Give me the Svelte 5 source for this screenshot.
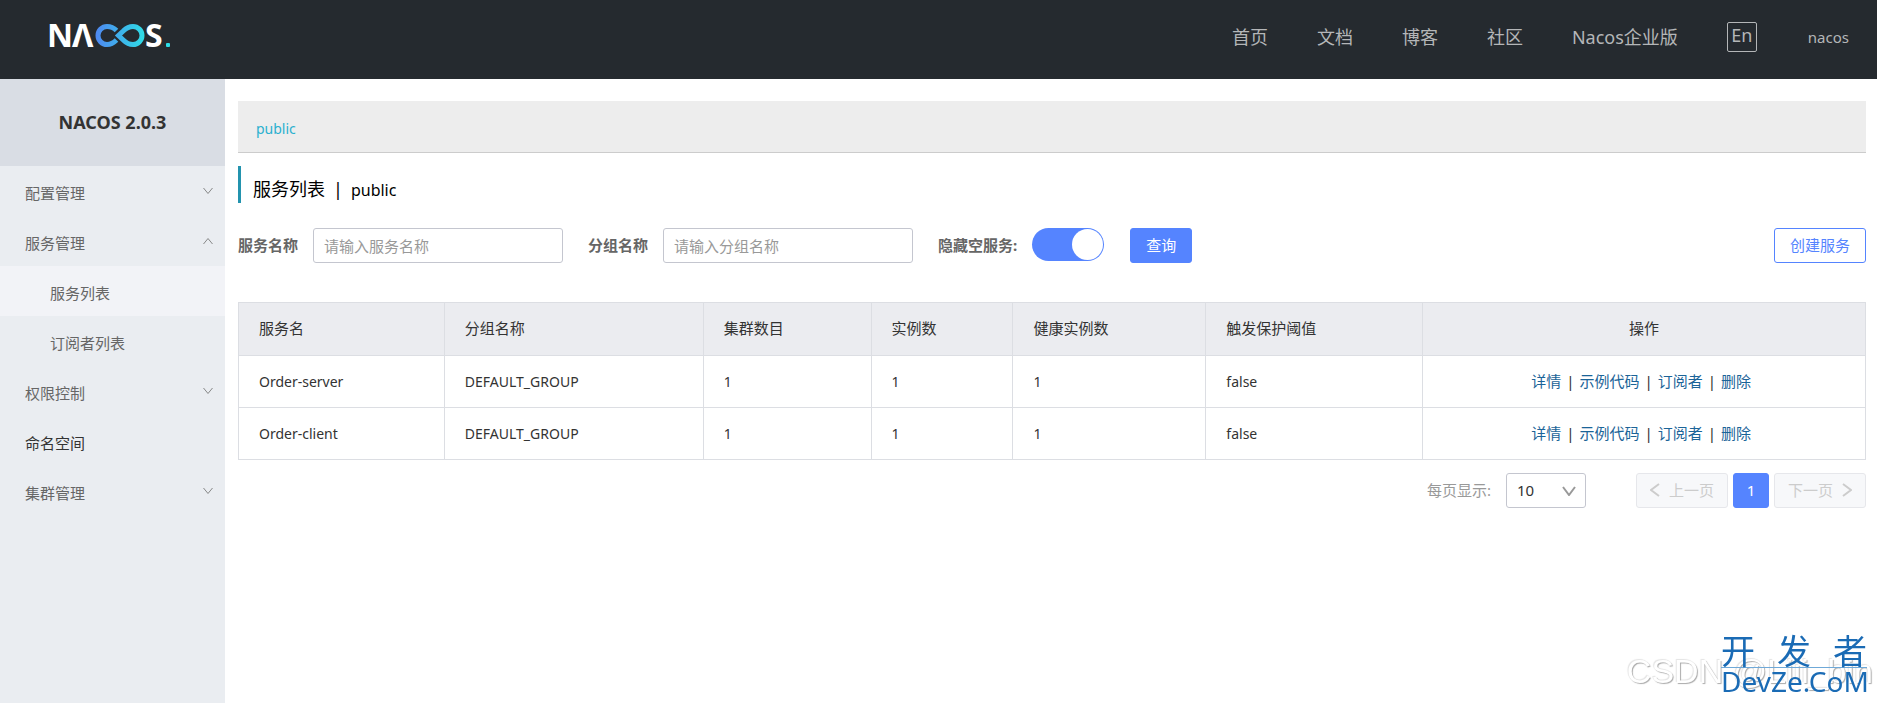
<script lang="ts">
	type MenuItem = {
		name: string;
		open?: boolean;
		leaf?: boolean;
		children?: string[];
	};

	const navs = ['首页', '文档', '博客', '社区', 'Nacos企业版'];
	const columns = [
		{ title: '服务名', width: 206 },
		{ title: '分组名称', width: 259 },
		{ title: '集群数目', width: 168 },
		{ title: '实例数', width: 142 },
		{ title: '健康实例数', width: 193 },
		{ title: '触发保护阈值', width: 217 },
		{ title: '操作', width: 443 }
	];
	const total = columns.reduce((sum, c) => sum + c.width, 0);
	const actions = ['详情', '示例代码', '订阅者', '删除'];

	let menus: MenuItem[] = $state([
		{ name: '配置管理' },
		{ name: '服务管理', open: true, children: ['服务列表', '订阅者列表'] },
		{ name: '权限控制' },
		{ name: '命名空间', leaf: true },
		{ name: '集群管理' }
	]);
	let current = $state('服务列表');
	let serviceName = $state('');
	let groupName = $state('');
	let hideEmpty = $state(true);
	let pageSize = $state('10');

	let services = $state([
		{ name: 'Order-server', group: 'DEFAULT_GROUP', clusters: 1, ips: 1, healthy: 1, protect: false },
		{ name: 'Order-client', group: 'DEFAULT_GROUP', clusters: 1, ips: 1, healthy: 1, protect: false }
	]);
</script>

<header>
	<a class="logo" href="#home" aria-label="Nacos">
		<svg width="130" height="52" viewBox="-4 -12 130 52">
			<defs>
				<linearGradient id="loop" gradientUnits="userSpaceOnUse" x1="45" x2="95" y1="0" y2="0">
					<stop offset="0" stop-color="#4f86f0" />
					<stop offset="1" stop-color="#2edde6" />
				</linearGradient>
			</defs>
			<text x="-3" y="27">N</text>
			<text x="22" y="27">Λ</text>
			<path d="M66.500 10.500C63.500 7.500 60.500 6.500 57 6.500a9 9 0 0 0 0 18c3.500 0 6.500-1.500 9.500-4.500" />
			<path
				d="M83 6.500c-4 0-7 1.800-9.500 4.300L68.500 15.500l5 4.700c2.500 2.500 5.500 4.300 9.500 4.300a9 9 0 0 0 0-18z"
			/>
			<text x="95" y="27">S</text>
			<rect x="116" y="23" width="4" height="4" rx="1" fill="#2edde6" />
		</svg>
	</a>
	<nav>
		{#each navs as nav (nav)}
			<a href="#{nav}">{nav}</a>
		{/each}
		<button class="lang">En</button>
		<a class="user" href="#user">nacos</a>
	</nav>
</header>

<div class="body">
	<aside>
		<h1>NACOS 2.0.3</h1>
		<ul>
			{#each menus as menu (menu.name)}
				<li>
					<button class="item" class:leaf={menu.leaf} onclick={() => (menu.open = !menu.open)}>
						{menu.name}
						{#if !menu.leaf}
							<svg class:up={menu.open} width="10" height="8" viewBox="0 0 10 8">
								<path d="M0.500 1L5 6.500L9.500 1" />
							</svg>
						{/if}
					</button>
					{#if menu.open && menu.children}
						{#each menu.children as child (child)}
							<button class="item sub" class:current={current === child} onclick={() => (current = child)}>
								{child}
							</button>
						{/each}
					{/if}
				</li>
			{/each}
		</ul>
	</aside>

	<main>
		<div class="namespace"><a href="#public">public</a></div>
		<h2>
			<span>服务列表</span>
			<span>|</span>
			<span class="ns">public</span>
		</h2>

		<form onsubmit={(e) => e.preventDefault()}>
			<label for="service">服务名称</label>
			<input id="service" class="text" type="text" placeholder="请输入服务名称" bind:value={serviceName} />
			<label for="group">分组名称</label>
			<input id="group" class="text" type="text" placeholder="请输入分组名称" bind:value={groupName} />
			<label for="hide">隐藏空服务:</label>
			<input id="hide" class="switch" type="checkbox" role="switch" bind:checked={hideEmpty} />
			<button class="primary">查询</button>
			<button class="create" type="button">创建服务</button>
		</form>

		<table>
			<colgroup>
				{#each columns as col (col.title)}
					<col style="width: {(col.width / total) * 100}%" />
				{/each}
			</colgroup>
			<thead>
				<tr>
					{#each columns as col (col.title)}
						<th>{col.title}</th>
					{/each}
				</tr>
			</thead>
			<tbody>
				{#each services as row (row.name)}
					<tr>
						<td>{row.name}</td>
						<td>{row.group}</td>
						<td>{row.clusters}</td>
						<td>{row.ips}</td>
						<td>{row.healthy}</td>
						<td>{row.protect}</td>
						<td>
							<div class="actions">
								{#each actions as action, i (action)}
									{#if i > 0}
										<span>|</span>
									{/if}
									<a href="#{row.name}">{action}</a>
								{/each}
							</div>
						</td>
					</tr>
				{/each}
			</tbody>
		</table>

		<div class="pagination">
			<label for="size">每页显示:</label>
			<div class="select">
				<select id="size" bind:value={pageSize}>
					<option>10</option>
					<option>20</option>
					<option>50</option>
				</select>
				<svg width="14" height="10" viewBox="0 0 14 10"><path d="M1 1L7 9L13 1" /></svg>
			</div>
			<button disabled>
				<svg width="10" height="14" viewBox="0 0 10 14"><path d="M9 1L1 7L9 13" /></svg>
				上一页
			</button>
			<button class="page">1</button>
			<button disabled>
				下一页
				<svg width="10" height="14" viewBox="0 0 10 14"><path d="M1 1L9 7L1 13" /></svg>
			</button>
		</div>
	</main>
</div>

<div class="csdn">CSDN @Liii_bin</div>
<div class="devze">
	<div class="cn"><span>开</span><span>发</span><span>者</span></div>
	<div class="en">DevZe.CoM</div>
</div>

<style>
	:global(body) {
		background: #fff;
	}

	:global(#app) {
		display: flex;
		flex-direction: column;
		min-height: 100vh;
		color: #333;
		font-family: 'Noto Sans', 'Noto Sans CJK SC', sans-serif;
		font-size: 15px;
		line-height: 20px;
	}

	a {
		color: inherit;
		text-decoration: none;
	}

	button,
	input,
	select {
		box-sizing: border-box;
		margin: 0;
		font: inherit;
	}

	svg path {
		fill: none;
		stroke: currentColor;
	}

	header {
		display: flex;
		justify-content: space-between;
		height: 79px;
		padding: 0 28px 0 46px;
		background: #252a2f;
	}

	.logo {
		padding-top: 8px;
	}

	.logo text {
		font-family: 'Noto Sans', sans-serif;
		font-size: 32px;
		font-weight: 700;
		fill: #fff;
	}

	.logo path {
		stroke: url(#loop);
		stroke-width: 5;
	}

	nav {
		display: flex;
		align-items: center;
		gap: 49px;
		padding-bottom: 5px;
		color: #b4b6b8;
		font-size: 18px;
	}

	.lang {
		width: 30px;
		height: 30px;
		padding: 0 0 4px;
		border: 1px solid #b4b6b8;
		border-radius: 2px;
		background: none;
		color: inherit;
	}

	.user {
		margin-left: 2px;
		font-size: 15px;
	}

	.body {
		display: flex;
		flex: 1;
	}

	aside {
		flex: 0 0 225px;
		background: #eaedf1;
	}

	h1 {
		margin: 0;
		background: #d9dde4;
		font-size: 18px;
		line-height: 87px;
		text-align: center;
	}

	ul {
		margin: 0;
		padding: 0;
		list-style: none;
	}

	.item {
		display: flex;
		align-items: center;
		justify-content: space-between;
		width: 100%;
		height: 50px;
		padding: 4px 12px 0 25px;
		border: 0;
		background: none;
		color: #666;
		text-align: left;
	}

	.item svg {
		margin-bottom: 4px;
		color: #888;
	}

	.item svg.up {
		transform: rotate(180deg);
	}

	.leaf {
		color: #333;
	}

	.sub {
		padding-left: 50px;
	}

	.current {
		background: #f2f3f7;
	}

	main {
		flex: 1;
		min-width: 0;
		padding: 22px 11px 0 13px;
	}

	.namespace {
		padding: 18px 18px 13px;
		border-bottom: 1px solid #ccc;
		background: #ededed;
		color: #2bb0cf;
		font-size: 14px;
	}

	h2 {
		display: flex;
		align-items: baseline;
		gap: 8px;
		box-sizing: border-box;
		height: 37px;
		margin: 13px 0 0;
		padding: 13px 0 0 12px;
		border-left: 3px solid #2393ae;
		color: #000;
		font-size: 18px;
		font-weight: 400;
	}

	.ns {
		font-size: 16px;
	}

	form {
		display: flex;
		align-items: center;
		margin: 25px 0 39px;
	}

	form label {
		margin-right: 15px;
		padding-bottom: 2px;
		color: #666;
		font-weight: 700;
	}

	.text {
		width: 250px;
		height: 35px;
		margin-right: 25px;
		padding: 0 10px;
		border: 1px solid #c4c6cf;
		border-radius: 3px;
		outline: 0;
	}

	.text::placeholder {
		color: #999;
		opacity: 1;
	}

	.switch {
		display: flex;
		justify-content: flex-start;
		align-self: flex-start;
		width: 72px;
		height: 33px;
		margin-right: 26px;
		padding: 1px;
		border-radius: 17px;
		background: #ccc;
		appearance: none;
	}

	.switch::before {
		content: '';
		width: 31px;
		border-radius: 50%;
		background: #fff;
	}

	.switch:checked {
		justify-content: flex-end;
		background: #5584ff;
	}

	.primary,
	.create,
	.pagination button {
		height: 35px;
		padding: 0 15px 2px;
		border: 1px solid #5584ff;
		border-radius: 3px;
	}

	.primary {
		background: #5584ff;
		color: #fff;
	}

	.create {
		margin-left: auto;
		background: #fff;
		color: #5584ff;
	}

	table {
		width: 100%;
		border-collapse: collapse;
		table-layout: fixed;
	}

	th,
	td {
		box-sizing: border-box;
		height: 52px;
		padding: 0 20px;
		border: 1px solid #dcdee3;
		font-size: 14px;
		font-weight: 400;
		text-align: left;
	}

	th {
		height: 53px;
		padding-bottom: 2px;
		background: #ebecf0;
		font-size: 15px;
	}

	th:last-child {
		text-align: center;
	}

	.actions {
		display: flex;
		justify-content: center;
		gap: 5px;
		margin-right: 6px;
		padding-bottom: 2px;
		font-size: 15px;
	}

	.actions a {
		color: #1b6498;
	}

	.pagination {
		display: flex;
		align-items: center;
		justify-content: flex-end;
		gap: 5px;
		margin-top: 13px;
		color: #999;
	}

	.pagination label {
		padding-bottom: 2px;
	}

	.select {
		display: grid;
		align-items: center;
		width: 80px;
		margin: 0 45px 0 10px;
	}

	.select select,
	.select svg {
		grid-area: 1 / 1;
	}

	.select svg {
		justify-self: end;
		margin-right: 10px;
		pointer-events: none;
	}

	select {
		width: 100%;
		height: 35px;
		padding: 0 10px 2px;
		border: 1px solid #c4c6cf;
		border-radius: 3px;
		background: #fff;
		color: #333;
		appearance: none;
	}

	.pagination button {
		display: flex;
		align-items: center;
		gap: 5px;
	}

	.pagination button:disabled {
		padding: 0 13px 2px;
		gap: 9px;
		border-color: #e6e7eb;
		background: #f7f8fa;
		color: #ccc;
	}

	.pagination svg path {
		stroke-width: 2;
	}

	.pagination .page {
		justify-content: center;
		width: 36px;
		padding: 0 0 2px;
		background: #5584ff;
		color: #fff;
	}

	.csdn {
		position: fixed;
		right: 4px;
		bottom: 12px;
		color: #fff;
		font-family: 'Liberation Sans', sans-serif;
		font-size: 34px;
		line-height: 40px;
		text-shadow: 1px 1px 1px #aaa, -1px -1px 1px #e4e4e4;
	}

	.devze {
		position: fixed;
		right: 10px;
		bottom: 9px;
		width: 146px;
		color: #1a6bb5;
	}

	.cn {
		display: flex;
		justify-content: space-between;
		border-bottom: 1px solid #6fa9d8;
		font-size: 34px;
		line-height: 32px;
	}

	.en {
		font-size: 28px;
		line-height: 26px;
	}
</style>
